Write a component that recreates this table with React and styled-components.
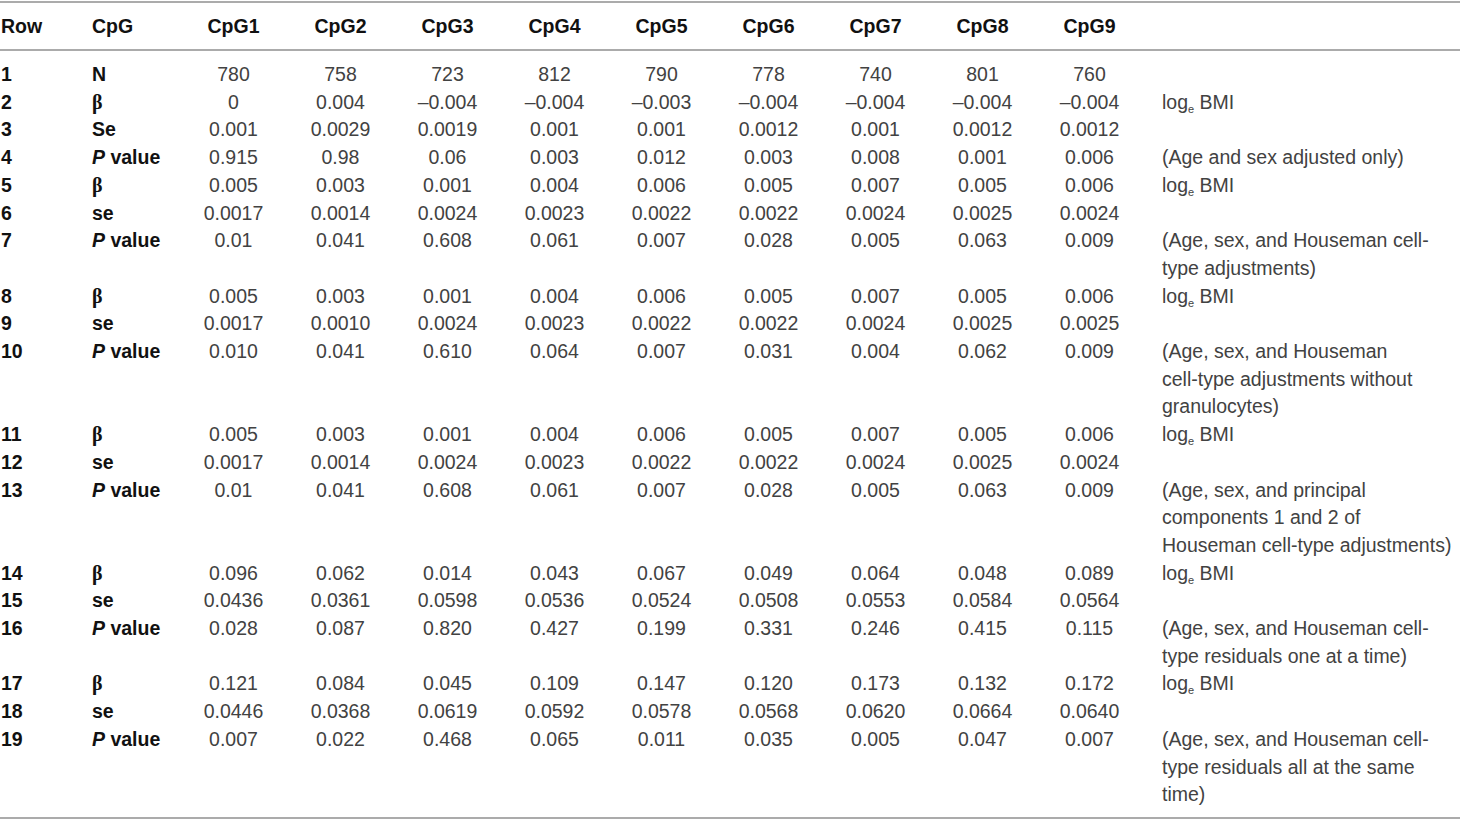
import React from "react";
import styled, { createGlobalStyle } from "styled-components";

const Global = createGlobalStyle`
  html, body { margin: 0; padding: 0; background: #fff; }
  body { font-family: "Liberation Sans", Arial, sans-serif; }
`;

const Page = styled.div`
  width: 1460px;
  padding-top: 1px;
`;

const Table = styled.table`
  width: 1460px;
  border-collapse: collapse;
  table-layout: fixed;
  font-size: 19.5px;
  color: #424242;
  border-top: 2px solid #ababab;
  border-bottom: 2px solid #ababab;
`;

const HeadRow = styled.tr`
  border-bottom: 2px solid #ababab;
`;

const Th = styled.th`
  height: 46px;
  padding: 0 0 0 ${(p) => p.$pl || 0}px;
  text-align: ${(p) => p.$align || "left"};
  font-weight: 700;
  color: #111;
  vertical-align: middle;
  white-space: nowrap;
`;

const Td = styled.td`
  padding: ${(p) => (p.$first ? "10px" : "0")} 0 ${(p) => (p.$last ? "8px" : "0")} ${(p) => p.$pl || 0}px;
  line-height: 27.7px;
  vertical-align: top;
  text-align: ${(p) => p.$align || "left"};
  white-space: nowrap;
`;

const RowNum = styled.span`
  font-weight: 700;
  color: #111;
`;

const Label = styled.span`
  font-weight: 700;
  color: #111;
`;

const Beta = styled.span`
  font-family: "Liberation Serif", "Times New Roman", serif;
  font-weight: 700;
  font-size: 20px;
  color: #111;
`;

const ItalicP = styled.i`
  font-style: italic;
`;

const Sub = styled.sub`
  font-size: 11px;
  vertical-align: -4px;
  line-height: 0;
`;

const Note = styled.div`
  line-height: 27.7px;
`;

const LOG = "log";

const rows = [
  ["N", ["780", "758", "723", "812", "790", "778", "740", "801", "760"], []],
  ["b", ["0", "0.004", "–0.004", "–0.004", "–0.003", "–0.004", "–0.004", "–0.004", "–0.004"], LOG],
  ["Se", ["0.001", "0.0029", "0.0019", "0.001", "0.001", "0.0012", "0.001", "0.0012", "0.0012"], []],
  ["P", ["0.915", "0.98", "0.06", "0.003", "0.012", "0.003", "0.008", "0.001", "0.006"], ["(Age and sex adjusted only)"]],
  ["b", ["0.005", "0.003", "0.001", "0.004", "0.006", "0.005", "0.007", "0.005", "0.006"], LOG],
  ["se", ["0.0017", "0.0014", "0.0024", "0.0023", "0.0022", "0.0022", "0.0024", "0.0025", "0.0024"], []],
  ["P", ["0.01", "0.041", "0.608", "0.061", "0.007", "0.028", "0.005", "0.063", "0.009"], ["(Age, sex, and Houseman cell-", "type adjustments)"]],
  ["b", ["0.005", "0.003", "0.001", "0.004", "0.006", "0.005", "0.007", "0.005", "0.006"], LOG],
  ["se", ["0.0017", "0.0010", "0.0024", "0.0023", "0.0022", "0.0022", "0.0024", "0.0025", "0.0025"], []],
  ["P", ["0.010", "0.041", "0.610", "0.064", "0.007", "0.031", "0.004", "0.062", "0.009"], ["(Age, sex, and Houseman", "cell-type adjustments without", "granulocytes)"]],
  ["b", ["0.005", "0.003", "0.001", "0.004", "0.006", "0.005", "0.007", "0.005", "0.006"], LOG],
  ["se", ["0.0017", "0.0014", "0.0024", "0.0023", "0.0022", "0.0022", "0.0024", "0.0025", "0.0024"], []],
  ["P", ["0.01", "0.041", "0.608", "0.061", "0.007", "0.028", "0.005", "0.063", "0.009"], ["(Age, sex, and principal", "components 1 and 2 of", "Houseman cell-type adjustments)"]],
  ["b", ["0.096", "0.062", "0.014", "0.043", "0.067", "0.049", "0.064", "0.048", "0.089"], LOG],
  ["se", ["0.0436", "0.0361", "0.0598", "0.0536", "0.0524", "0.0508", "0.0553", "0.0584", "0.0564"], []],
  ["P", ["0.028", "0.087", "0.820", "0.427", "0.199", "0.331", "0.246", "0.415", "0.115"], ["(Age, sex, and Houseman cell-", "type residuals one at a time)"]],
  ["b", ["0.121", "0.084", "0.045", "0.109", "0.147", "0.120", "0.173", "0.132", "0.172"], LOG],
  ["se", ["0.0446", "0.0368", "0.0619", "0.0592", "0.0578", "0.0568", "0.0620", "0.0664", "0.0640"], []],
  ["P", ["0.007", "0.022", "0.468", "0.065", "0.011", "0.035", "0.005", "0.047", "0.007"], ["(Age, sex, and Houseman cell-", "type residuals all at the same", "time)"]],
];

function renderLabel(k) {
  if (k === "b") return <Beta>β</Beta>;
  if (k === "P")
    return (
      <Label>
        <ItalicP>P</ItalicP> value
      </Label>
    );
  return <Label>{k}</Label>;
}

function renderNote(n) {
  if (n === LOG)
    return (
      <Note>
        log<Sub>e</Sub> BMI
      </Note>
    );
  return n.map((line, i) => <Note key={i}>{line}</Note>);
}

const headers = ["CpG1", "CpG2", "CpG3", "CpG4", "CpG5", "CpG6", "CpG7", "CpG8", "CpG9"];

export default function App() {
  const last = rows.length - 1;
  return (
    <Page>
      <Global />
      <Table>
        <colgroup>
          <col style={{ width: 92 }} />
          <col style={{ width: 88 }} />
          {headers.map((h) => (
            <col key={h} style={{ width: 107 }} />
          ))}
          <col />
        </colgroup>
        <thead>
          <HeadRow>
            <Th $pl={1}>Row</Th>
            <Th>CpG</Th>
            {headers.map((h) => (
              <Th key={h} $align="center">
                {h}
              </Th>
            ))}
            <Th />
          </HeadRow>
        </thead>
        <tbody>
          {rows.map(([label, vals, note], i) => (
            <tr key={i}>
              <Td $pl={1} $first={i === 0} $last={i === last}>
                <RowNum>{i + 1}</RowNum>
              </Td>
              <Td $first={i === 0} $last={i === last}>
                {renderLabel(label)}
              </Td>
              {vals.map((v, j) => (
                <Td key={j} $align="center" $first={i === 0} $last={i === last}>
                  {v}
                </Td>
              ))}
              <Td $pl={19} $first={i === 0} $last={i === last}>
                {renderNote(note)}
              </Td>
            </tr>
          ))}
        </tbody>
      </Table>
    </Page>
  );
}
